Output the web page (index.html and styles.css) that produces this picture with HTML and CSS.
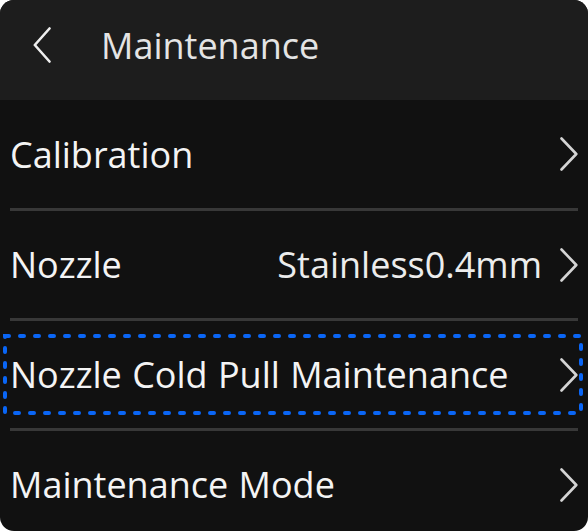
FILE: index.html
```html
<!DOCTYPE html>
<html>
<head>
  <meta charset="UTF-8" />
  <title>Maintenance</title>
  <link rel="stylesheet" href="styles.css">
</head>
<body>
  <div class="screen">
    <div class="header">
      <svg class="back" width="18" height="36" viewBox="0 0 18 36">
        <path d="M16.5 1.5 L1.8 18 L16.5 34.5" />
      </svg>
      <div class="title">Maintenance</div>
    </div>

    <div class="list">
      <div class="item">
        <span class="label">Calibration</span>
        <svg class="arrow" width="18" height="34" viewBox="0 0 18 34">
          <path d="M1.5 1.5 L16.3 17 L1.5 32.5" />
        </svg>
      </div>
      <div class="item">
        <span class="label">Nozzle</span>
        <span class="value">Stainless0.4mm</span>
        <svg class="arrow" width="18" height="34" viewBox="0 0 18 34">
          <path d="M1.5 1.5 L16.3 17 L1.5 32.5" />
        </svg>
      </div>
      <div class="item focused">
        <span class="label">Nozzle Cold Pull Maintenance</span>
        <svg class="arrow" width="18" height="34" viewBox="0 0 18 34">
          <path d="M1.5 1.5 L16.3 17 L1.5 32.5" />
        </svg>
        <svg class="focus-ring" width="580" height="81" viewBox="0 0 580 81">
          <rect x="2" y="2" width="576" height="77" />
        </svg>
      </div>
      <div class="item">
        <span class="label">Maintenance Mode</span>
        <svg class="arrow" width="18" height="34" viewBox="0 0 18 34">
          <path d="M1.5 1.5 L16.3 17 L1.5 32.5" />
        </svg>
      </div>
    </div>
  </div>
</body>
</html>
```

FILE: styles.css
```css
body {
  margin: 0;
  background: #fff;
  font-family: "Open Sans", "Noto Sans", sans-serif;
}
.screen {
  width: 588px;
  height: 531px;
  border-radius: 14px;
  overflow: hidden;
  background: #111;
}
.header {
  height: 100px;
  box-sizing: border-box;
  padding: 0 0 10px 33px;
  background: #1d1d1d;
  display: flex;
  align-items: center;
}
.back path {
  fill: none;
  stroke: #eee;
  stroke-width: 2.6;
  stroke-linecap: round;
  stroke-linejoin: round;
}
.title {
  margin-left: 50px;
  font-size: 36px;
  color: #e4e4e4;
}
.list {
  padding: 0 10px;
}
.item {
  box-sizing: border-box;
  height: 110px;
  border-top: 3px solid #383838;
  display: flex;
  align-items: center;
  font-size: 36px;
  color: #f4f4f4;
}
.item:first-child {
  height: 108px;
  border-top: none;
}
.label {
  flex: 1;
  white-space: nowrap;
  word-spacing: 1px;
}
.value {
  margin-right: 18px;
  color: #ececec;
}
.arrow path {
  fill: none;
  stroke: #d4d4d4;
  stroke-width: 2.6;
  stroke-linecap: round;
  stroke-linejoin: round;
}
.focused {
  position: relative;
}
.focus-ring {
  position: absolute;
  left: -7px;
  top: 13px;
}
.focus-ring rect {
  fill: none;
  stroke: #0a66f6;
  stroke-width: 4;
  stroke-dasharray: 4 11;
  stroke-linecap: round;
}
```
